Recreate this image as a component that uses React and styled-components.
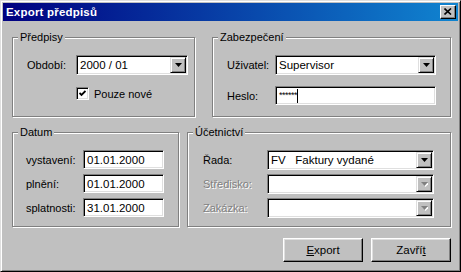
import styled, { createGlobalStyle } from "styled-components";

const Global = createGlobalStyle`
  html, body {
    margin: 0;
    padding: 0;
    background: #c0c0c0;
  }
  * { box-sizing: border-box; }
`;

const Window = styled.div`
  width: 461px;
  height: 272px;
  background: #c0c0c0;
  border: 1px solid;
  border-color: #dfdfdf #000 #000 #dfdfdf;
  box-shadow: inset 1px 1px 0 #fff, inset -1px -1px 0 #808080;
  padding: 2px;
  font-family: "Liberation Sans", Arial, sans-serif;
  font-size: 11px;
  color: #000;
  display: flex;
  flex-direction: column;
`;

const TitleBar = styled.div`
  height: 18px;
  background: linear-gradient(to right, #000080, #1084d0);
  display: flex;
  align-items: center;
  justify-content: space-between;
  padding: 0 2px 0 3px;
`;

const Title = styled.span`
  color: #fff;
  font-weight: bold;
  font-size: 11.5px;
  letter-spacing: 0.2px;
`;

const CloseButton = styled.div`
  width: 16px;
  height: 14px;
  background: #c0c0c0;
  border: 1px solid;
  border-color: #fff #000 #000 #fff;
  box-shadow: inset -1px -1px 0 #808080;
  display: flex;
  align-items: center;
  justify-content: center;
  padding-bottom: 1px;
`;

const Body = styled.div`
  padding: 16px 7px 0 9px;
  display: flex;
  flex-direction: column;
`;

const GroupRow = styled.div`
  display: flex;
  gap: ${(p) => p.$gap}px;
  margin-top: ${(p) => p.$top || 0}px;
`;

const Group = styled.div`
  position: relative;
  width: ${(p) => p.$w}px;
  height: ${(p) => p.$h}px;
  border: 1px solid #808080;
  box-shadow: inset 1px 1px 0 #fff, 1px 1px 0 #fff;
  padding: ${(p) => p.$pad};
`;

const Legend = styled.span`
  position: absolute;
  top: -8px;
  left: 5px;
  padding: 0 2px;
  background: #c0c0c0;
  line-height: 14px;
`;

const Form = styled.div`
  display: grid;
  grid-template-columns: ${(p) => p.$label}px ${(p) => p.$field}px;
  row-gap: ${(p) => p.$gap}px;
  align-items: center;
`;

const Label = styled.span`
  color: ${(p) => (p.$disabled ? "#808080" : "#000")};
  text-shadow: ${(p) => (p.$disabled ? "1px 1px 0 #fff" : "none")};
  white-space: nowrap;
`;

const Sunken = styled.div`
  height: ${(p) => p.$h}px;
  background: #fff;
  border: 1px solid;
  border-color: #808080 #fff #fff #808080;
  box-shadow: inset 1px 1px 0 #000, inset -1px -1px 0 #dfdfdf;
  padding: 2px 2px 2px 3px;
  display: flex;
  align-items: center;
  white-space: pre;
  font-size: 11.5px;
`;

const ComboBox = styled(Sunken)`
  padding-right: 2px;
  justify-content: space-between;
`;

const DropButton = styled.div`
  width: 16px;
  height: 16px;
  margin-right: -1px;
  background: #c0c0c0;
  border: 1px solid;
  border-color: #dfdfdf #000 #000 #dfdfdf;
  box-shadow: inset 1px 1px 0 #fff, inset -1px -1px 0 #808080;
  display: flex;
  align-items: center;
  justify-content: center;
`;

const Stars = styled.span`
  font-size: 9px;
  letter-spacing: -0.5px;
  align-self: flex-start;
  margin-top: 1px;
`;

const Caret = styled.span`
  width: 1px;
  height: 14px;
  background: #000;
`;

const CheckRow = styled.label`
  grid-column: 2;
  display: flex;
  align-items: center;
  gap: 5px;
  height: 13px;
`;

const CheckBox = styled.span`
  width: 13px;
  height: 13px;
  background: #fff;
  border: 1px solid;
  border-color: #808080 #fff #fff #808080;
  box-shadow: inset 1px 1px 0 #000, inset -1px -1px 0 #dfdfdf;
  display: flex;
  align-items: center;
  justify-content: center;
`;

const ButtonRow = styled.div`
  display: flex;
  justify-content: flex-end;
  gap: 8px;
  margin-top: 11px;
`;

const Button = styled.button`
  width: 80px;
  height: 24px;
  background: #c0c0c0;
  border: 1px solid;
  border-color: #fff #000 #000 #fff;
  box-shadow: inset -1px -1px 0 #808080, inset 1px 1px 0 #dfdfdf;
  font-family: "Liberation Sans", Arial, sans-serif;
  font-size: 11.5px;
  color: #000;
  padding: 0;
`;

const Arrow = ({ disabled }) => (
  <svg width="7" height="5" viewBox="0 0 7 5">
    {disabled && <polygon points="1,1 8,1 4.5,5" fill="#fff" />}
    <polygon points="0,0 7,0 3.5,4" fill={disabled ? "#808080" : "#000"} />
  </svg>
);

const Combo = ({ value, disabled, h = 20 }) => (
  <ComboBox $h={h}>
    <span>{value}</span>
    <DropButton>
      <Arrow disabled={disabled} />
    </DropButton>
  </ComboBox>
);

export default function App() {
  return (
    <>
      <Global />
      <Window>
        <TitleBar>
          <Title>Export předpisů</Title>
          <CloseButton>
            <svg width="8" height="7" viewBox="0 0 8 7">
              <path d="M0.5 0.5 L7 6.5 M7 0.5 L0.5 6.5" stroke="#000" strokeWidth="1.6" />
            </svg>
          </CloseButton>
        </TitleBar>
        <Body>
          <GroupRow $gap={17}>
            <Group $w={183} $h={80} $pad="17px 0 0 14px">
              <Legend>Předpisy</Legend>
              <Form $label={49} $field={112} $gap={12}>
                <Label>Období:</Label>
                <Combo value="2000 / 01" />
                <CheckRow>
                  <CheckBox>
                    <svg width="7" height="7" viewBox="0 0 7 7">
                      <path d="M0.5 3 L2.5 5 L6.5 1" stroke="#000" strokeWidth="1.8" fill="none" />
                    </svg>
                  </CheckBox>
                  <span>Pouze nové</span>
                </CheckRow>
              </Form>
            </Group>
            <Group $w={239} $h={80} $pad="17px 0 0 14px">
              <Legend>Zabezpečení</Legend>
              <Form $label={48} $field={161} $gap={11}>
                <Label>Uživatel:</Label>
                <Combo value="Supervisor" />
                <Label>Heslo:</Label>
                <Sunken $h={19}>
                  <Stars>******</Stars>
                  <Caret />
                </Sunken>
              </Form>
            </Group>
          </GroupRow>
          <GroupRow $gap={8} $top={15}>
            <Group $w={167} $h={95} $pad="17px 0 0 13px">
              <Legend>Datum</Legend>
              <Form $label={57} $field={81} $gap={5}>
                <Label>vystavení:</Label>
                <Sunken $h={19}>01.01.2000</Sunken>
                <Label>plnění:</Label>
                <Sunken $h={19}>01.01.2000</Sunken>
                <Label>splatnosti:</Label>
                <Sunken $h={19}>31.01.2000</Sunken>
              </Form>
            </Group>
            <Group $w={264} $h={95} $pad="17px 0 0 15px">
              <Legend>Účetnictví</Legend>
              <Form $label={64} $field={167} $gap={4}>
                <Label>Řada:</Label>
                <Combo value="FV   Faktury vydané" />
                <Label $disabled>Středisko:</Label>
                <Combo value="" disabled />
                <Label $disabled>Zakázka:</Label>
                <Combo value="" disabled />
              </Form>
            </Group>
          </GroupRow>
          <ButtonRow>
            <Button>
              <u>E</u>xport
            </Button>
            <Button>
              Zavří<u>t</u>
            </Button>
          </ButtonRow>
        </Body>
      </Window>
    </>
  );
}
